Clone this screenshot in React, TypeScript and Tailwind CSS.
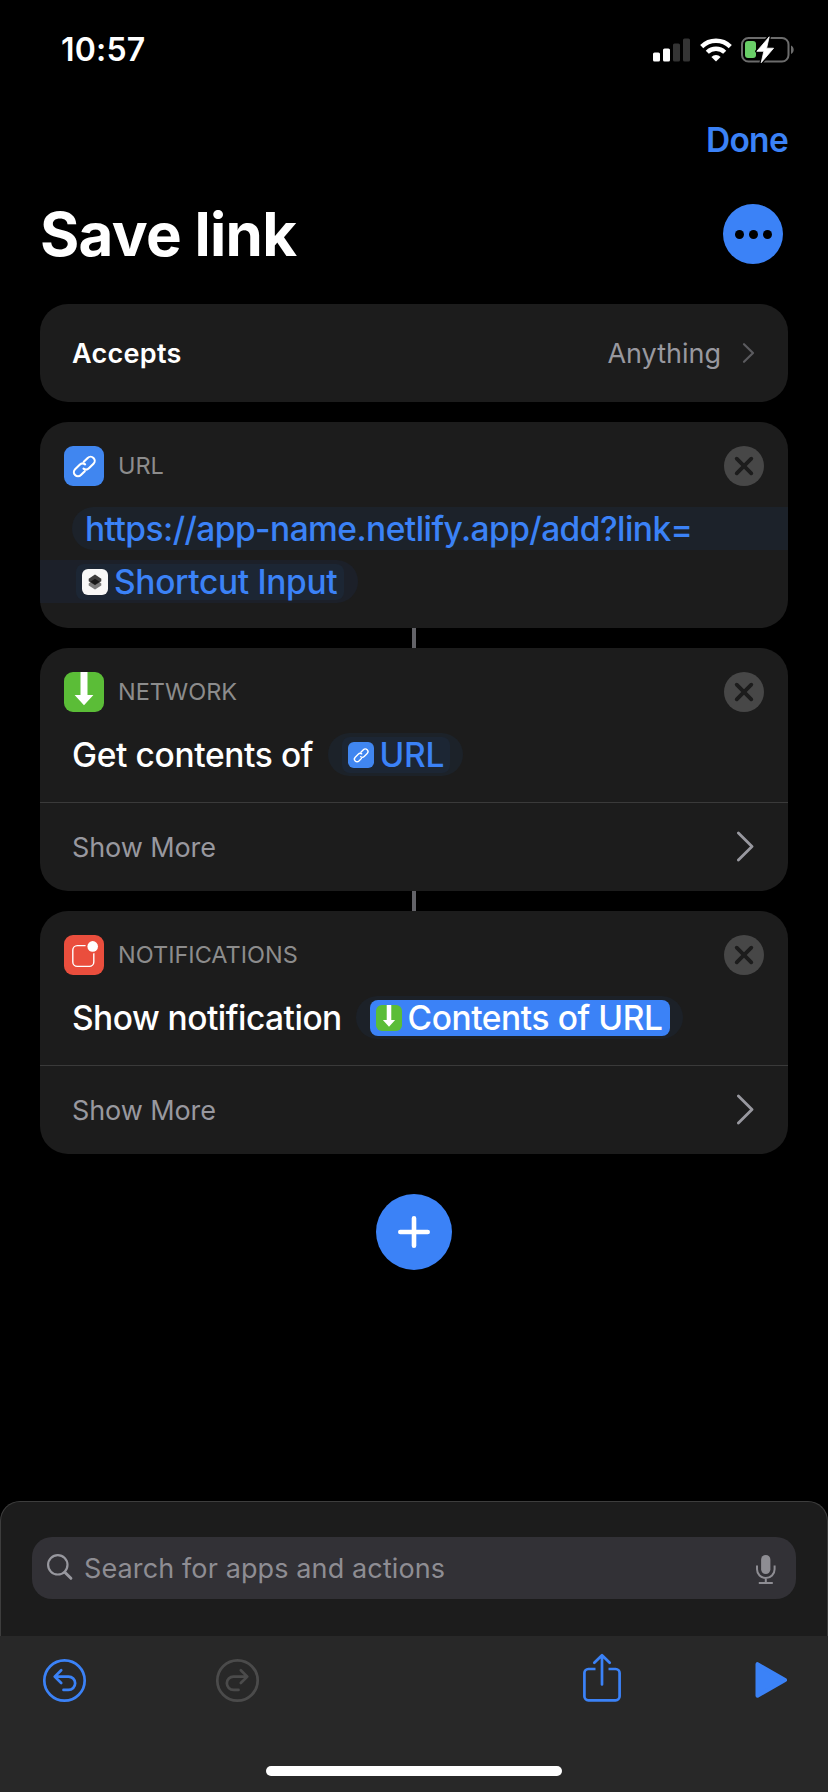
import type { ReactNode } from "react";

function SignalIcon() {
  return (
    <svg width="37" height="24" viewBox="0 0 37 24">
      <rect x="0" y="14.5" width="7" height="9" rx="1.6" fill="#fff" />
      <rect x="10" y="10.5" width="7" height="13" rx="1.6" fill="#fff" />
      <rect x="20" y="5.5" width="7" height="18" rx="1.6" fill="#343434" />
      <rect x="30" y="0.5" width="7" height="23" rx="1.6" fill="#343434" />
    </svg>
  );
}

function WifiIcon() {
  return (
    <svg width="32" height="24" viewBox="0 0 32 24">
      <g fill="none" stroke="#fff" strokeWidth="4.4">
        <path d="M1.7 8.6a20.4 20.4 0 0 1 28.6 0" />
        <path d="M7.3 14.3a12.4 12.4 0 0 1 17.4 0" />
      </g>
      <path d="M16 23.6l-4.6-4.7a6.6 6.6 0 0 1 9.2 0z" fill="#fff" />
    </svg>
  );
}

function BatteryIcon() {
  return (
    <svg width="54" height="28" viewBox="0 0 54 28">
      <rect x="1" y="2" width="46.5" height="23.5" rx="6.5" fill="none" stroke="#6c6c6c" strokeWidth="2" />
      <path d="M50 9.5c3.6 1.4 3.6 7.1 0 8.5z" fill="#6c6c6c" />
      <rect x="4" y="5" width="11" height="17" rx="3" fill="#69ce67" />
      <path d="M28.2 0.8L15.8 15.3h7l-2.6 11.4L32.6 12.2h-7z" fill="#fff" stroke="#000" strokeWidth="3.4" strokeLinejoin="round" />
      <path d="M28.2 0.8L15.8 15.3h7l-2.6 11.4L32.6 12.2h-7z" fill="#fff" stroke="#fff" strokeWidth="0.8" strokeLinejoin="round" />
    </svg>
  );
}

function LinkTile({ small = false }: { small?: boolean }) {
  const size = small ? 26 : 40;
  return (
    <svg width={size} height={size} viewBox="0 0 40 40" fill="none" className="shrink-0">
      <rect width="40" height="40" rx="9" fill="#4086f0" />
      <g stroke="#fff" strokeWidth="2.1" strokeLinecap="round">
        <path d="M19.8 15.8L23.7 11.9a4.1 4.1 0 0 1 5.8 5.8L24.9 22.3a4.1 4.1 0 0 1-5.4.4" />
        <path d="M20.8 25.2L16.9 29.1a4.1 4.1 0 0 1-5.8-5.8L15.7 18.7a4.1 4.1 0 0 1 5.4-.4" />
      </g>
    </svg>
  );
}

function DownloadTile({ small = false }: { small?: boolean }) {
  const size = small ? 26 : 40;
  return (
    <svg width={size} height={size} viewBox="0 0 40 40" className="shrink-0">
      <rect width="40" height="40" rx="9" fill="#5bbd37" />
      <path d="M16.5 0h7v23h5.9L20 33.3 10.6 23h5.9z" fill="#fff" />
    </svg>
  );
}

function NotificationTile() {
  return (
    <svg width="40" height="40" viewBox="0 0 40 40" className="shrink-0">
      <rect width="40" height="40" rx="9" fill="#ea4e3d" />
      <rect x="8.8" y="10.6" width="21" height="20.8" rx="4.5" fill="none" stroke="#fff" strokeWidth="1.4" />
      <circle cx="28.7" cy="11.4" r="7.2" fill="#ea4e3d" />
      <circle cx="28.7" cy="11.4" r="5.3" fill="#fff" />
    </svg>
  );
}

function ShortcutsTile() {
  return (
    <svg width="26" height="26" viewBox="0 0 26 26" className="shrink-0">
      <rect width="26" height="26" rx="6" fill="#f8f8f8" />
      <path d="M13 9.8l6.3 4.6v2L13 20.6l-6.3-4.2v-2z" fill="#7d7d7d" />
      <path d="M13 5.6l6.3 4.2v2.4L13 16.2l-6.3-4V9.8z" fill="#3d3d3d" />
      <path d="M13 9.7l4.6 3-4.6 3-4.6-3z" fill="#191919" />
    </svg>
  );
}

function CloseButton() {
  return (
    <button aria-label="Remove action" className="ml-auto size-10">
      <svg width="40" height="40" viewBox="0 0 40 40">
        <circle cx="20" cy="20" r="20" fill="#474747" />
        <path d="M12.7 12.7l14.6 14.6M27.3 12.7L12.7 27.3" stroke="#1c1c1c" strokeWidth="3.8" strokeLinecap="round" />
      </svg>
    </button>
  );
}

function ActionHeader({ icon, title }: { icon: ReactNode; title: string }) {
  return (
    <div className="flex h-10 items-center">
      {icon}
      <span className="ml-[14px] text-[23.5px] text-[#8c8c8c]">{title}</span>
      <CloseButton />
    </div>
  );
}

function ShowMore() {
  return (
    <button className="flex h-[89px] w-full items-center justify-between border-t border-[#3a3a3a] pr-[34px] pl-8">
      <span className="pt-[2px] text-[27px] tracking-[-0.1px] text-[#98989f]">Show More</span>
      <svg width="18" height="32" viewBox="0 0 18 32" fill="none" stroke="#98989f" strokeWidth="2.8" strokeLinecap="round" strokeLinejoin="round">
        <path d="M2.4 1.9L16 15.4 2.4 28.9" />
      </svg>
    </button>
  );
}

function Connector() {
  return <div className="mx-auto h-5 w-1 bg-[#636368]" />;
}

export default function App() {
  return (
    <div className="flex h-[1792px] w-[828px] flex-col overflow-hidden bg-black font-['Inter','Liberation_Sans',sans-serif] text-white">
      <header className="flex h-[99px] items-center pr-[33px] pl-[61px]">
        <span className="pt-px text-[32px] font-semibold tracking-[0.2px]">10:57</span>
        <div className="ml-auto flex items-center">
          <SignalIcon />
          <span className="mr-[9px] ml-[10px]">
            <WifiIcon />
          </span>
          <BatteryIcon />
        </div>
      </header>

      <div className="flex h-[82px] items-center justify-end pr-10">
        <button className="text-[33.5px] font-semibold tracking-[-0.7px] text-[#3b82f7]">Done</button>
      </div>

      <div className="flex h-[106px] items-center justify-between pr-[45px] pl-10">
        <h1 className="text-[60px] font-bold tracking-[-0.7px]">Save link</h1>
        <button aria-label="Details" className="flex size-[60px] items-center justify-center gap-[5px] rounded-full bg-[#3b82f7]">
          <span className="size-[9px] rounded-full bg-black" />
          <span className="size-[9px] rounded-full bg-black" />
          <span className="size-[9px] rounded-full bg-black" />
        </button>
      </div>

      <main className="mt-[17px] flex flex-col px-10">
        <section className="flex h-[98px] items-center rounded-[28px] bg-[#1c1c1c] pr-[33px] pl-8">
          <span className="pt-[3px] text-[27px] font-semibold tracking-[0.3px]">Accepts</span>
          <span className="ml-auto pt-[3px] text-[27px] text-[#98989f]">Anything</span>
          <svg className="ml-[21px]" width="13" height="22" viewBox="0 0 13 22" fill="none" stroke="#5b5b5f" strokeWidth="2.2" strokeLinecap="round" strokeLinejoin="round">
            <path d="M2 2.2l9 8.8-9 8.8" />
          </svg>
        </section>

        <section className="mt-5 h-[206px] overflow-hidden rounded-[28px] bg-[#1c1c1c] pt-6">
          <div className="px-6">
            <ActionHeader icon={<LinkTile />} title="URL" />
          </div>
          <div className="mt-[21px] ml-8 flex h-[43px] items-center rounded-l-full bg-[#1c222a] pt-[2px] pl-[13px] text-[33.5px] font-medium tracking-[-0.55px] whitespace-nowrap text-[#3b82f7]">
            https://app-name.netlify.app/add?link=
          </div>
          <div className="mt-[10px] flex h-[43px] w-[318px] items-center rounded-r-full bg-[#1c2029] pl-9">
            <span className="flex h-9 w-[268px] items-center rounded-lg bg-[#1c2634] pl-[6px] text-[33.5px] font-medium tracking-[-0.33px] whitespace-nowrap text-[#3b82f7]">
              <ShortcutsTile />
              <span className="ml-[6px] pt-[2px]">Shortcut Input</span>
            </span>
          </div>
        </section>

        <Connector />

        <section className="flex h-[243px] flex-col overflow-hidden rounded-[28px] bg-[#1c1c1c] pt-6">
          <div className="px-6">
            <ActionHeader icon={<DownloadTile />} title="NETWORK" />
          </div>
          <div className="mt-[21px] mb-auto flex h-[43px] items-center pl-8 text-[33.5px] font-medium whitespace-nowrap">
            <span className="w-[256px] pt-[2px] tracking-[-0.37px]">Get contents of</span>
            <span className="flex h-[43px] w-[135px] items-center justify-center rounded-full bg-[#1c2229]">
              <span className="flex h-9 w-[108px] items-center rounded-lg bg-[#1c2634] pl-[6px] text-[#3b82f7]">
                <LinkTile small />
                <span className="ml-[6px] pt-[2px] tracking-[-0.3px]">URL</span>
              </span>
            </span>
          </div>
          <ShowMore />
        </section>

        <Connector />

        <section className="flex h-[243px] flex-col overflow-hidden rounded-[28px] bg-[#1c1c1c] pt-6">
          <div className="px-6">
            <ActionHeader icon={<NotificationTile />} title="NOTIFICATIONS" />
          </div>
          <div className="mt-[21px] mb-auto flex h-[43px] items-center pl-8 text-[33.5px] font-medium whitespace-nowrap">
            <span className="w-[284px] pt-[2px] tracking-[-0.52px]">Show notification</span>
            <span className="flex h-[43px] w-[327px] items-center justify-center rounded-full bg-[#1c2128]">
              <span className="flex h-9 w-[300px] items-center rounded-lg bg-[#3b82f7] pl-[6px]">
                <DownloadTile small />
                <span className="ml-[6px] pt-[2px] tracking-[-0.42px]">Contents of URL</span>
              </span>
            </span>
          </div>
          <ShowMore />
        </section>

        <button aria-label="Add action" className="mx-auto mt-10 size-[76px] rounded-full bg-[#3b82f7]">
          <svg width="76" height="76" viewBox="0 0 76 76" stroke="#fff" strokeWidth="4.6" strokeLinecap="round">
            <path d="M38 24.3v27.4M24.3 38h27.4" />
          </svg>
        </button>
      </main>

      <footer className="mt-auto">
        <div className="h-[135px] rounded-t-[20px] border border-b-0 border-[#3d3d3d] bg-[#1c1c1c] px-[31px] pt-[35px]">
          <div className="flex h-[62px] items-center rounded-[20px] bg-[#323136] pr-[19px] pl-[14px]">
            <svg width="28" height="28" viewBox="0 0 28 28" fill="none" stroke="#98989f" strokeLinecap="round">
              <circle cx="11.8" cy="10.8" r="9.7" strokeWidth="2.2" />
              <path d="M18.8 18.3l6.1 6" strokeWidth="3" />
            </svg>
            <span className="ml-[10px] pt-[2px] text-[27px] tracking-[0.12px] text-[#8e8d93]">Search for apps and actions</span>
            <svg className="ml-auto" width="22" height="34" viewBox="0 0 22 34" fill="none" stroke="#8e8d93" strokeWidth="2">
              <rect x="6.1" y="4" width="9.3" height="19" rx="4.65" fill="#8e8d93" stroke="none" />
              <path d="M2 14.5v3.7a8.8 8.8 0 0 0 17.6 0v-3.7M10.8 27v5M3.8 32h14" />
            </svg>
          </div>
        </div>
        <div className="flex h-[156px] flex-col bg-[#282828]">
          <div className="flex h-[89px] items-center pr-[40px] pl-[42px]">
            <button aria-label="Undo" className="size-[45px]">
              <svg width="45" height="45" viewBox="0 0 45 45" fill="none" stroke="#3b82f7" strokeWidth="2.7" strokeLinecap="round" strokeLinejoin="round">
                <circle cx="22.5" cy="22.5" r="20.2" />
                <path d="M19.2 12.2l-6.5 6.4 6.5 6.4M13 18.6h13.5a6.6 6.6 0 0 1 0 13.3h-5" />
              </svg>
            </button>
            <button aria-label="Redo" disabled className="ml-[128px] size-[45px]">
              <svg width="45" height="45" viewBox="0 0 45 45" fill="none" stroke="#4b4b4b" strokeWidth="2.7" strokeLinecap="round" strokeLinejoin="round">
                <circle cx="22.5" cy="22.5" r="20.2" />
                <path d="M25.8 12.2l6.5 6.4-6.5 6.4M32 18.6H18.5a6.6 6.6 0 0 0 0 13.3h5" />
              </svg>
            </button>
            <button aria-label="Share" className="mb-[5px] ml-auto h-[50px] w-[38px]">
              <svg width="38" height="50" viewBox="0 0 38 50" fill="none" stroke="#3b82f7" strokeWidth="2.7" strokeLinecap="round" strokeLinejoin="round">
                <path d="M12.5 16H5.4a4 4 0 0 0-4 4v23.3a4 4 0 0 0 4 4h27.2a4 4 0 0 0 4-4V20a4 4 0 0 0-4-4h-7.1" strokeLinecap="butt" />
                <path d="M19 31.5V3M11.3 9.8L19 2.2l7.7 7.6" />
              </svg>
            </button>
            <button aria-label="Run" className="mb-px ml-[134px] h-[38px] w-[33px]">
              <svg width="33" height="38" viewBox="0 0 33 38" fill="#3b82f7" stroke="#3b82f7" strokeWidth="4" strokeLinejoin="round">
                <path d="M2.5 3.2v31.6L30 19z" />
              </svg>
            </button>
          </div>
          <div className="mx-auto mt-[41px] h-[10px] w-[296px] rounded-full bg-white" />
        </div>
      </footer>
    </div>
  );
}
